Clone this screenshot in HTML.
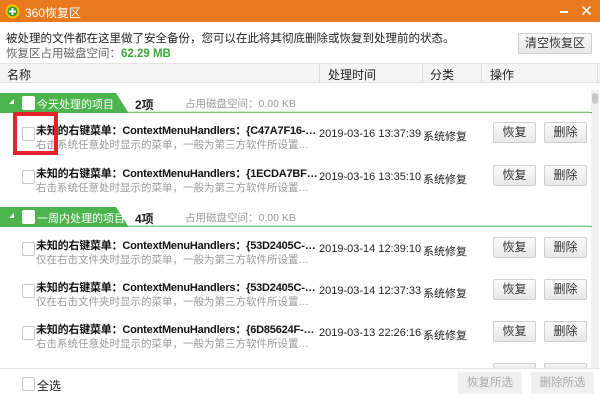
<!DOCTYPE html>
<html><head><meta charset="utf-8"><style>
*{margin:0;padding:0;box-sizing:border-box}
body{width:600px;height:400px;overflow:hidden;background:#fff;font-family:"Liberation Sans","Noto Sans CJK SC",sans-serif;font-size:12px;color:#222;position:relative}
.a{position:absolute;white-space:nowrap}
.btn{position:absolute;border:1px solid #cfcfcf;background:linear-gradient(#fafafa,#e8e8e8);text-align:center;font-size:12px;color:#333;border-radius:2px}
.cb{position:absolute;width:13px;height:14px;border:1px solid #c8c8c8;background:#fff;border-radius:2px}
.t{font-weight:bold;font-size:11px;color:#111;width:283px;overflow:hidden;text-overflow:ellipsis;letter-spacing:-0.2px}
.s{font-size:10.5px;color:#999;width:283px;overflow:hidden;text-overflow:ellipsis}
.tm{font-size:11px}
</style></head><body>
<div class="a" style="left:0;top:0;width:600px;height:22px;background:#e8791e"></div>
<svg class="a" style="left:5px;top:4px" width="15" height="15" viewBox="0 0 15 15"><circle cx="7.5" cy="7.5" r="7" fill="#f3c300"/><circle cx="7.5" cy="7.5" r="5" fill="#2d9a2d"/><path d="M7.5 4v7M4 7.5h7" stroke="#fff" stroke-width="2"/></svg>
<div class="a" style="left:25px;top:4px;color:#fff;font-size:12px">360恢复区</div>
<div class="a" style="left:560px;top:11px;width:8px;height:1.5px;background:#fff"></div>
<svg class="a" style="left:582px;top:6px" width="9" height="9"><path d="M0.5 0.5L8.5 8.5M8.5 0.5L0.5 8.5" stroke="#fff" stroke-width="1.6"/></svg>
<div class="a" style="left:6px;top:30px;font-size:11.5px;color:#222">被处理的文件都在这里做了安全备份，您可以在此将其彻底删除或恢复到处理前的状态。</div>
<div class="a" style="left:6px;top:45px;font-size:11.5px;color:#666">恢复区占用磁盘空间：<b style="color:#3aa53a">62.29 MB</b></div>
<div class="btn" style="left:518px;top:33px;width:74px;height:21px;line-height:19px">清空恢复区</div>
<div class="a" style="left:0;top:63px;width:600px;height:20px;background:#f4f4f4;border-top:1px solid #e4e4e4;border-bottom:1px solid #e4e4e4"></div>
<div class="a" style="left:319px;top:63px;width:1px;height:20px;background:#ddd"></div>
<div class="a" style="left:422px;top:63px;width:1px;height:20px;background:#ddd"></div>
<div class="a" style="left:481px;top:63px;width:1px;height:20px;background:#ddd"></div>
<div class="a" style="left:597px;top:63px;width:1px;height:20px;background:#ddd"></div>
<div class="a" style="left:7px;top:66px">名称</div>
<div class="a" style="left:328px;top:66px">处理时间</div>
<div class="a" style="left:430px;top:66px">分类</div>
<div class="a" style="left:490px;top:66px">操作</div>
<div class="a" style="left:591px;top:90px;width:8px;height:278px;background:#f0f0f0"></div>
<div class="a" style="left:592px;top:93px;width:6px;height:11px;background:#c8c8c8;border-radius:3px"></div>

<svg class="a" style="left:0;top:93px" width="592" height="20"><path d="M0 0H116L128 19H592V20H0Z" fill="#4cb44c"/><path d="M128 19H590" stroke="#a8dba8"/><path d="M9 11l5-5v5z" fill="#fff"/></svg>
<div class="cb" style="left:22px;top:96px;border:none"></div>
<div class="a" style="left:37px;top:96px;color:#fff;font-size:11px">今天处理的项目</div>
<div class="a" style="left:135px;top:96px;font-weight:bold">2项</div>
<div class="a" style="left:185px;top:96px;color:#999;font-size:10.5px">占用磁盘空间：0.00 KB</div>

<div class="cb" style="left:22px;top:127px"></div>
<div class="a t" style="left:36px;top:122px">未知的右键菜单：ContextMenuHandlers：{C47A7F16-0572-495A...</div>
<div class="a s" style="left:36px;top:137px">右击系统任意处时显示的菜单，一般为第三方软件所设置的扩展功能。...</div>
<div class="a tm" style="left:319px;top:128px">2019-03-16 13:37:39</div>
<div class="a tm" style="left:423px;top:128px">系统修复</div>
<div class="btn" style="left:493px;top:122px;width:43px;height:21px;line-height:19px">恢复</div>
<div class="btn" style="left:544px;top:122px;width:43px;height:21px;line-height:19px">删除</div>

<div class="cb" style="left:22px;top:170px"></div>
<div class="a t" style="left:36px;top:165px">未知的右键菜单：ContextMenuHandlers：{1ECDA7BF-4DFA-41D...</div>
<div class="a s" style="left:36px;top:180px">右击系统任意处时显示的菜单，一般为第三方软件所设置的扩展功能。...</div>
<div class="a tm" style="left:319px;top:171px">2019-03-16 13:35:10</div>
<div class="a tm" style="left:423px;top:171px">系统修复</div>
<div class="btn" style="left:493px;top:165px;width:43px;height:21px;line-height:19px">恢复</div>
<div class="btn" style="left:544px;top:165px;width:43px;height:21px;line-height:19px">删除</div>

<svg class="a" style="left:0;top:207px" width="592" height="20"><path d="M0 0H116L128 19H592V20H0Z" fill="#4cb44c"/><path d="M128 19H590" stroke="#a8dba8"/><path d="M9 11l5-5v5z" fill="#fff"/></svg>
<div class="cb" style="left:22px;top:210px;border:none"></div>
<div class="a" style="left:37px;top:210px;color:#fff;font-size:11px">一周内处理的项目</div>
<div class="a" style="left:135px;top:210px;font-weight:bold">4项</div>
<div class="a" style="left:185px;top:210px;color:#999;font-size:10.5px">占用磁盘空间：0.00 KB</div>

<div class="cb" style="left:22px;top:242px"></div>
<div class="a t" style="left:36px;top:237px">未知的右键菜单：ContextMenuHandlers：{53D2405C-48AB-4C8...</div>
<div class="a s" style="left:36px;top:252px">仅在右击文件夹时显示的菜单，一般为第三方软件所设置的扩展功能。...</div>
<div class="a tm" style="left:319px;top:243px">2019-03-14 12:39:10</div>
<div class="a tm" style="left:423px;top:243px">系统修复</div>
<div class="btn" style="left:493px;top:237px;width:43px;height:21px;line-height:19px">恢复</div>
<div class="btn" style="left:544px;top:237px;width:43px;height:21px;line-height:19px">删除</div>

<div class="cb" style="left:22px;top:284px"></div>
<div class="a t" style="left:36px;top:279px">未知的右键菜单：ContextMenuHandlers：{53D2405C-48AB-4C8...</div>
<div class="a s" style="left:36px;top:294px">仅在右击文件夹时显示的菜单，一般为第三方软件所设置的扩展功能。...</div>
<div class="a tm" style="left:319px;top:285px">2019-03-14 12:37:33</div>
<div class="a tm" style="left:423px;top:285px">系统修复</div>
<div class="btn" style="left:493px;top:279px;width:43px;height:21px;line-height:19px">恢复</div>
<div class="btn" style="left:544px;top:279px;width:43px;height:21px;line-height:19px">删除</div>

<div class="cb" style="left:22px;top:326px"></div>
<div class="a t" style="left:36px;top:321px">未知的右键菜单：ContextMenuHandlers：{6D85624F-305A-491D...</div>
<div class="a s" style="left:36px;top:336px">右击系统任意处时显示的菜单，一般为第三方软件所设置的扩展功能。...</div>
<div class="a tm" style="left:319px;top:327px">2019-03-13 22:26:16</div>
<div class="a tm" style="left:423px;top:327px">系统修复</div>
<div class="btn" style="left:493px;top:321px;width:43px;height:21px;line-height:19px">恢复</div>
<div class="btn" style="left:544px;top:321px;width:43px;height:21px;line-height:19px">删除</div>
<div class="btn" style="left:493px;top:363px;width:43px;height:5px;border-bottom:none"></div>
<div class="btn" style="left:544px;top:363px;width:43px;height:5px;border-bottom:none"></div>

<div class="a" style="left:0;top:368px;width:600px;height:32px;background:#fff;border-top:1px solid #e4e4e4"></div>
<div class="cb" style="left:22px;top:377px"></div>
<div class="a" style="left:37px;top:377px">全选</div>
<div class="a" style="left:458px;top:372px;width:64px;height:22px;background:#f0f0f0;color:#aaa;text-align:center;line-height:22px;font-size:11.5px">恢复所选</div>
<div class="a" style="left:531px;top:372px;width:63px;height:22px;background:#f0f0f0;color:#aaa;text-align:center;line-height:22px;font-size:11.5px">删除所选</div>

<div class="a" style="left:13px;top:112px;width:45px;height:43px;border:4px solid #e8202a"></div>
</body></html>
